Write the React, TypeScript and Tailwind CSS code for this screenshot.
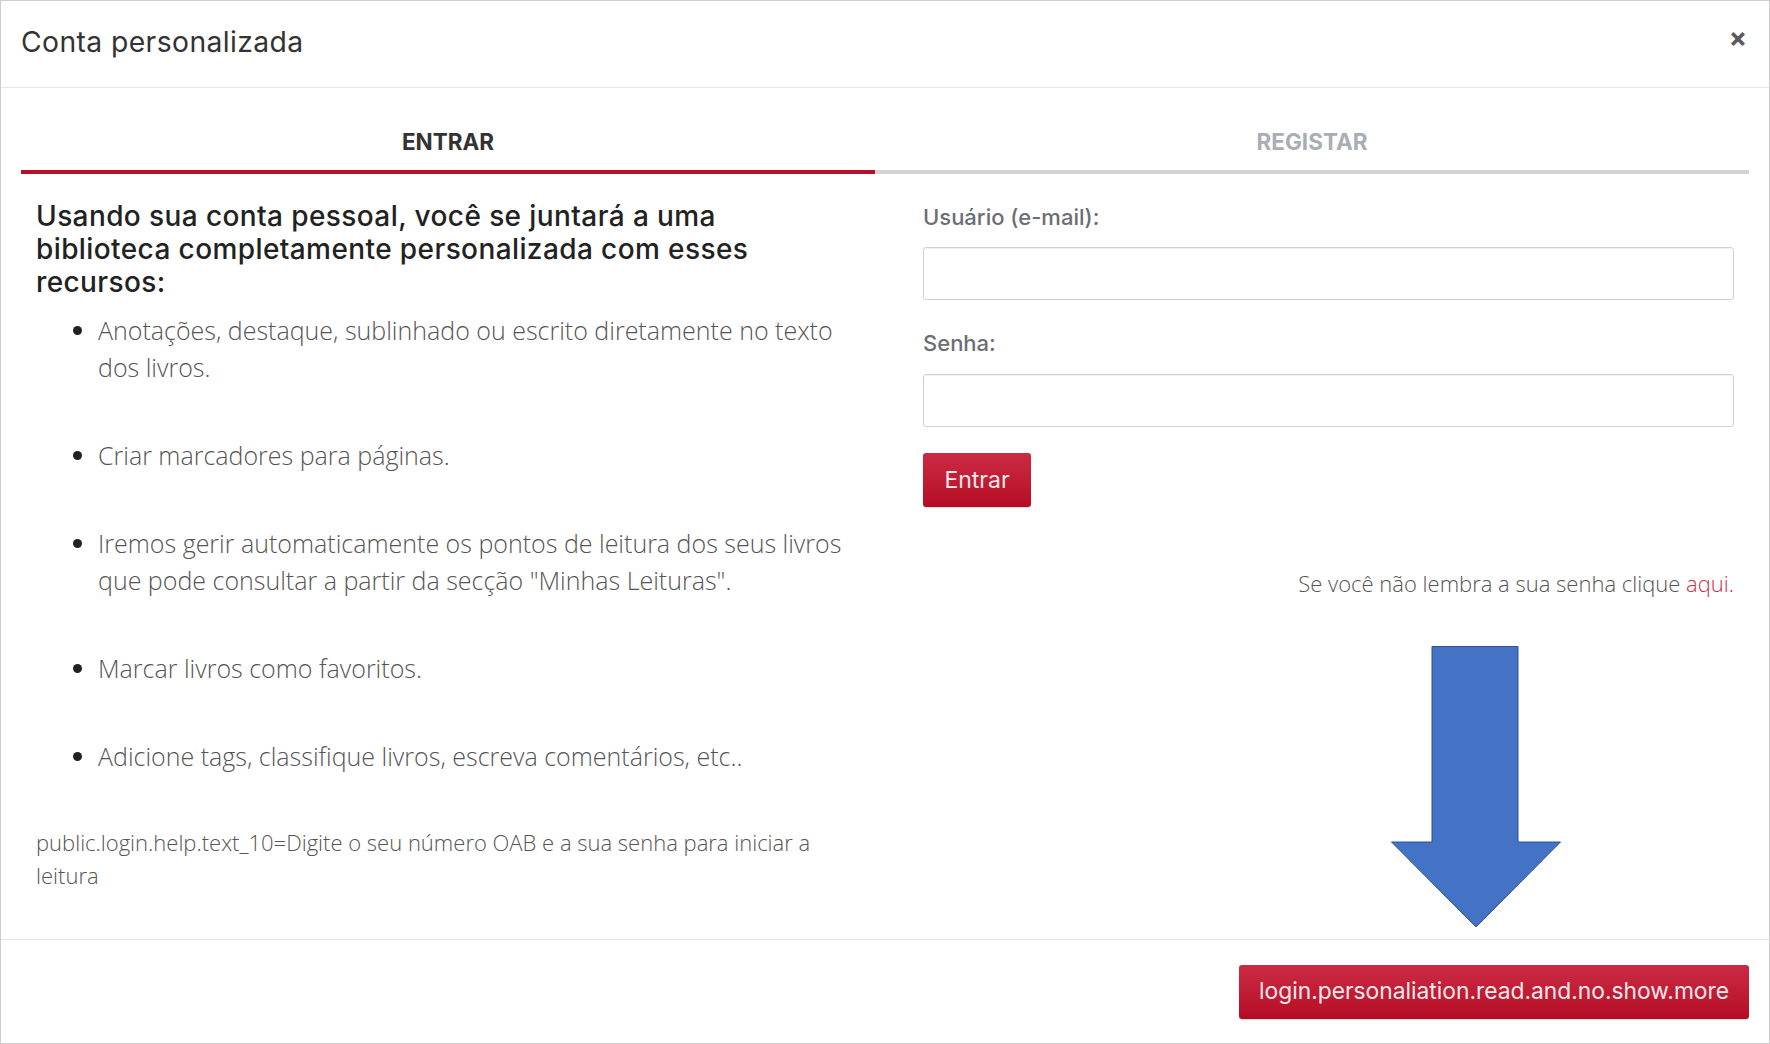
import React from 'react'

const heading = "font-['Inter','Liberation_Sans',sans-serif]"
const body = "font-['Open_Sans','Liberation_Sans',sans-serif]"

const features = [
  'Anotações, destaque, sublinhado ou escrito diretamente no texto dos livros.',
  'Criar marcadores para páginas.',
  'Iremos gerir automaticamente os pontos de leitura dos seus livros que pode consultar a partir da secção "Minhas Leituras".',
  'Marcar livros como favoritos.',
  'Adicione tags, classifique livros, escreva comentários, etc..',
]

function DownArrow() {
  return (
    <svg
      className="pointer-events-none absolute left-[1390px] top-[645px]"
      width="170"
      height="282"
      viewBox="0 0 170 282"
    >
      <polygon
        points="41,0.5 127,0.5 127,196 169.5,196 85,281 0.5,196 41,196"
        fill="#4472c4"
        stroke="#2f528f"
        strokeWidth="1"
      />
    </svg>
  )
}

export default function App() {
  return (
    <div className="relative flex h-[1044px] w-[1770px] flex-col border border-[#cdcdcd] bg-white">
      {/* header */}
      <div className="flex h-[87px] items-center justify-between border-b border-[#e3e6e8] pl-[20px] pr-[22px]">
        <h2 className={`${heading} mt-[-4px] text-[28.3px] font-normal tracking-[0.4px] text-[#333]`}>Conta personalizada</h2>
        <button className={`${heading} mt-[-14px] text-[27px] font-bold leading-none text-[#5a5a5a]`}>×</button>
      </div>

      <div className="flex-1 px-[20px]">
        {/* tabs */}
        <div className="flex">
          <div className={`${heading} w-[854px] border-b-4 border-[#b5102c] pb-[14px] pt-[40px] text-center text-[22.5px] font-bold leading-[28px] text-[#333]`}>
            ENTRAR
          </div>
          <div className={`${heading} flex-1 border-b-4 border-[#d2d5d8] pb-[14px] pt-[40px] text-center text-[22.5px] font-bold leading-[28px] text-[#a9aeb3]`}>
            REGISTAR
          </div>
        </div>

        <div className="flex">
          {/* left column */}
          <div className="w-[854px] px-[15px] pt-[26px]">
            <h3 className={`${heading} max-w-[770px] text-[28px] font-medium leading-[33px] tracking-[0.4px] text-[#222]`}>
              Usando sua conta pessoal, você se juntará a uma biblioteca completamente personalizada com esses recursos:
            </h3>
            <ul className={`${body} mt-[13px] list-disc pl-[62px] pr-[10px] text-[25px] font-light leading-[37px] text-[#555]`}>
              {features.map((f) => (
                <li key={f} className="mb-[51px] marker:text-[#222]">
                  {f}
                </li>
              ))}
            </ul>
            <p className={`${body} pr-[20px] text-[22px] font-light leading-[33px] text-[#555]`}>
              public.login.help.text_10=Digite o seu número OAB e a sua senha para iniciar a leitura
            </p>
          </div>

          {/* right column */}
          <div className="flex-1 pl-[48px] pr-[15px] pt-[29px]">
            <label className={`${heading} mb-[16px] block text-[22px] font-medium leading-[28px] text-[#6b6e72]`}>
              Usuário (e-mail):
            </label>
            <input
              type="text"
              className="mb-[29px] block h-[53px] w-full rounded-[3px] border border-[#cfd2d4] shadow-[inset_0_1px_1px_rgba(0,0,0,0.06)] outline-none"
            />
            <label className={`${heading} mb-[17px] block text-[22px] font-medium leading-[28px] text-[#6b6e72]`}>
              Senha:
            </label>
            <input
              type="password"
              className="block h-[53px] w-full rounded-[3px] border border-[#cfd2d4] shadow-[inset_0_1px_1px_rgba(0,0,0,0.06)] outline-none"
            />
            <button
              className={`${heading} mt-[26px] h-[54px] w-[108px] rounded-[3px] bg-gradient-to-b from-[#cc2a44] to-[#b50a24] text-[23px] font-normal text-[#fbe9ec] shadow-[0_1px_1px_rgba(0,0,0,0.15)]`}
            >
              Entrar
            </button>
            <p className={`${body} mt-[61px] text-right text-[22px] font-light leading-[30px] text-[#555]`}>
              Se você não lembra a sua senha clique <a className="text-[#c8304b]">aqui.</a>
            </p>
          </div>
        </div>
      </div>

      {/* footer */}
      <div className="flex h-[104px] items-center justify-end border-t border-[#e3e6e8] pr-[20px]">
        <button
          className={`${heading} h-[54px] w-[510px] rounded-[3px] bg-gradient-to-b from-[#cc2a44] to-[#b50a24] text-[22.8px] font-normal text-[#fbe9ec] shadow-[0_1px_1px_rgba(0,0,0,0.15)]`}
        >
          login.personaliation.read.and.no.show.more
        </button>
      </div>

      <DownArrow />
    </div>
  )
}
